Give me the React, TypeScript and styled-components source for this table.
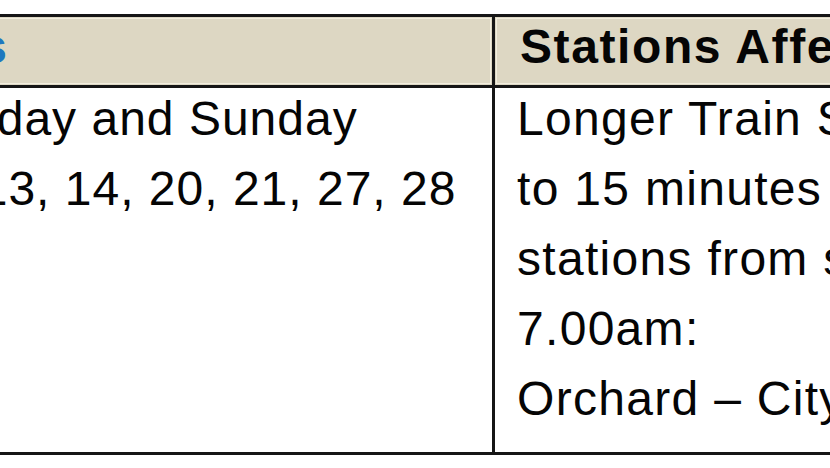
import React from "react";
import styled, { createGlobalStyle } from "styled-components";

const GlobalStyle = createGlobalStyle`
  html, body {
    margin: 0;
    padding: 0;
    background: #fff;
  }
`;

const Frame = styled.div`
  width: 830px;
  height: 468px;
  overflow: hidden;
  background: #fff;
`;

const Table = styled.table`
  border-collapse: separate;
  border-spacing: 0;
  table-layout: fixed;
  width: 1343px;
  margin: 14px 0 0 -148px;
  border-top: 3px solid #161616;
  border-bottom: 3px solid #161616;
  border-left: 3px solid #161616;
  font-family: "Liberation Sans", Arial, sans-serif;
  color: #050505;
`;

const HeadCell = styled.th<{ $w: number; $pad: number; $link?: boolean; $divider?: boolean }>`
  box-sizing: border-box;
  width: ${(p) => p.$w}px;
  padding: 0 0 8px ${(p) => p.$pad}px;
  background: #ddd7c3;
  box-shadow: inset 0 0 0 1px #ddd7c3, inset 0 0 0 2px #f2eedf;
  border-bottom: 3px solid #161616;
  border-right: ${(p) => (p.$divider ? "3px solid #161616" : "none")};
  text-align: left;
  vertical-align: top;
  font-size: 48px;
  font-weight: bold;
  line-height: 60px;
  letter-spacing: ${(p) => (p.$link ? 0.8 : 1.6)}px;
  white-space: nowrap;
  color: ${(p) => (p.$link ? "#1e78bf" : "#050505")};
`;

const BodyCell = styled.td<{ $divider?: boolean }>`
  padding: 0 22px 22px 22px;
  border-right: ${(p) => (p.$divider ? "3px solid #161616" : "none")};
  vertical-align: top;
`;

const Lines = styled.div<{ $spacing: number }>`
  display: flex;
  flex-direction: column;
  gap: 8px;
  letter-spacing: ${(p) => p.$spacing}px;
`;

const Line = styled.div`
  font-size: 48px;
  line-height: 62px;
  white-space: nowrap;
`;

const dates = ["Saturday and Sunday", "July 13, 14, 20, 21, 27, 28"];

const stations = [
  "Longer Train Service Intervals of up",
  "to 15 minutes at the following MRT",
  "stations from start of service to",
  "7.00am:",
  "Orchard \u2013 City Hall",
];

export default function App() {
  return (
    <>
      <GlobalStyle />
      <Frame>
        <Table>
          <thead>
            <tr>
              <HeadCell $w={640} $pad={18} $link $divider>
                Dates
              </HeadCell>
              <HeadCell $w={700} $pad={25}>
                Stations Affected
              </HeadCell>
            </tr>
          </thead>
          <tbody>
            <tr>
              <BodyCell $divider>
                <Lines $spacing={1}>
                  {dates.map((d) => (
                    <Line key={d}>{d}</Line>
                  ))}
                </Lines>
              </BodyCell>
              <BodyCell>
                <Lines $spacing={1.3}>
                  {stations.map((s) => (
                    <Line key={s}>{s}</Line>
                  ))}
                </Lines>
              </BodyCell>
            </tr>
          </tbody>
        </Table>
      </Frame>
    </>
  );
}
